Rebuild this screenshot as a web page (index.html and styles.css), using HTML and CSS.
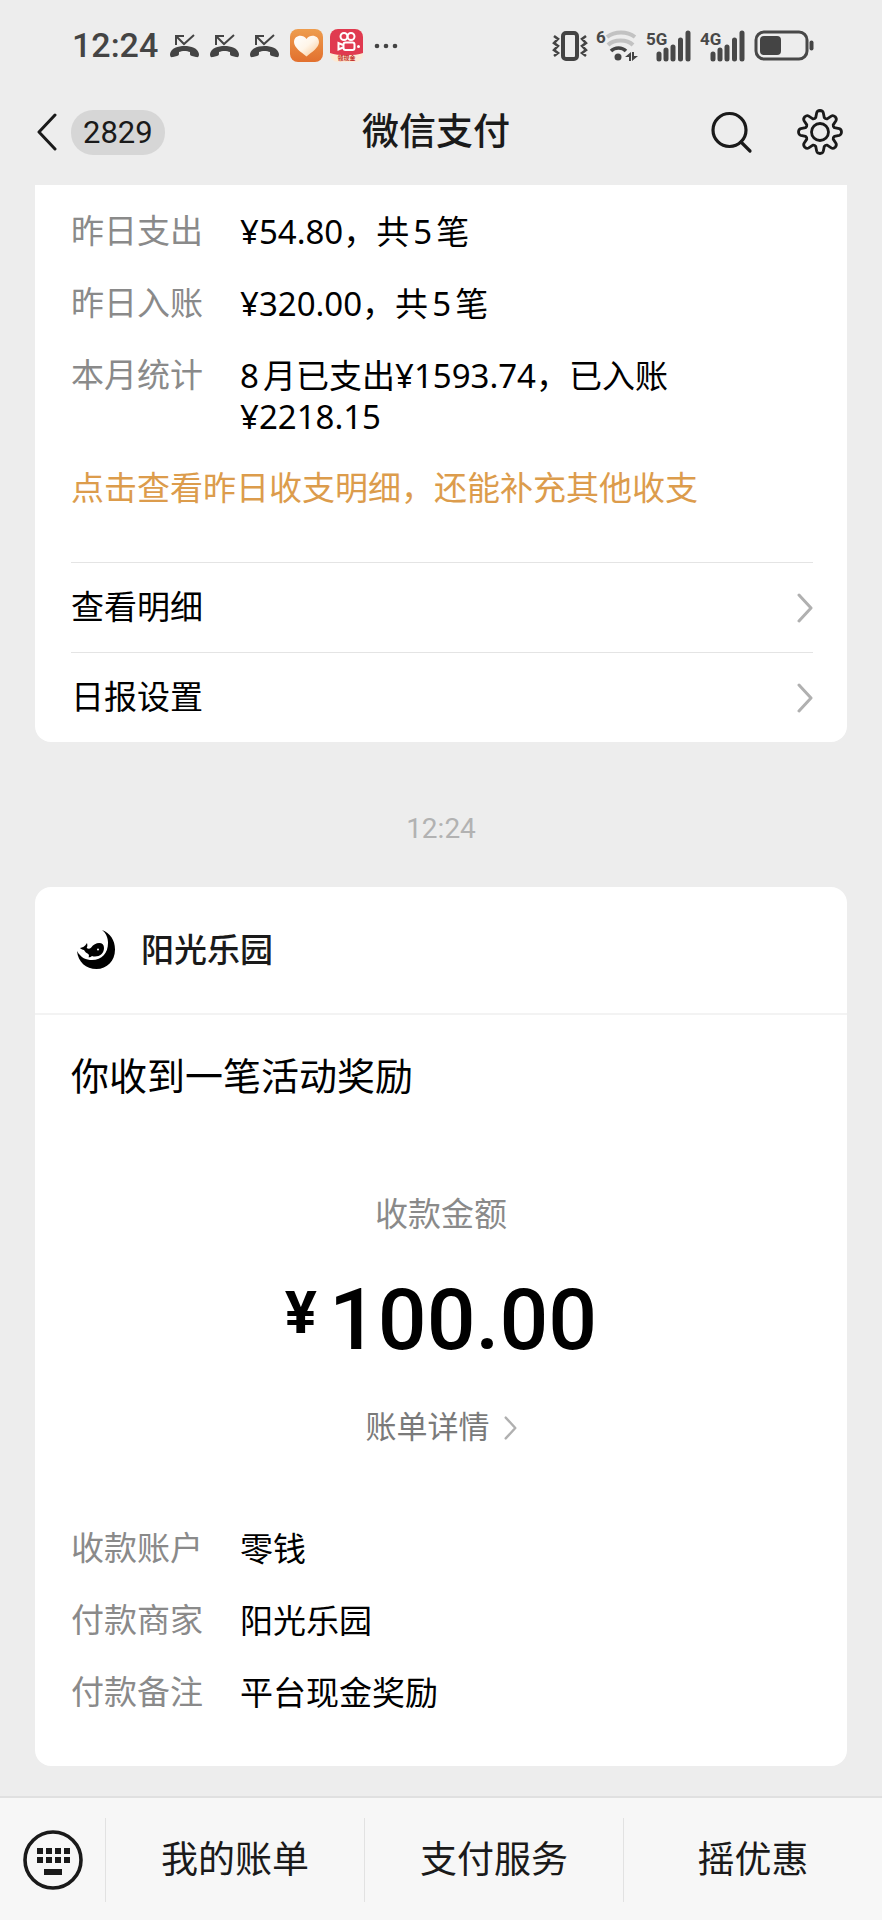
FILE: index.html
```html
<!DOCTYPE html>
<html lang="zh-CN">
<head>
    <meta charset="UTF-8">
    <meta name="viewport" content="width=device-width, initial-scale=1.0">
    <title>微信支付</title>
    <link rel="stylesheet" href="styles.css">
</head>
<body>
    <!-- shared icons -->
    <svg class="defs" width="0" height="0">
        <symbol id="missed" viewBox="0 0 29 24">
            <path d="M6 11V2h8M6 2l8 8L24 1" fill="none" stroke="#444" stroke-width="2"/>
            <path d="M0 20c1-6 8-8 14.500-8S28 14 29 20c0 3-1 3.500-3 3l-4-1c-2-.5-2-1-2-4-3-1.500-8-1.500-11 0 0 3 0 3.500-2 4l-4 1c-2 .5-3 0-3-3z" fill="#444"/>
        </symbol>
        <symbol id="bars" viewBox="0 0 46 32">
            <path d="M13 24v5M20 20v9M27 17v12M34.500 10v19M42 3v26" stroke="#484848" stroke-width="5" stroke-linecap="round"/>
        </symbol>
        <symbol id="arrow" viewBox="0 0 16 30">
            <path d="M2 2l12 13L2 28" fill="none" stroke="#b0b0b0" stroke-width="3" stroke-linecap="round" stroke-linejoin="round"/>
        </symbol>
    </svg>

    <div class="status-bar">
        <span class="clock">12:24</span>
        <div class="status-left">
            <svg width="29" height="24"><use href="#missed"/></svg>
            <svg width="29" height="24"><use href="#missed"/></svg>
            <svg width="29" height="24"><use href="#missed"/></svg>
            <svg class="app" width="33" height="33" viewBox="0 0 33 33">
                <defs>
                    <linearGradient id="orange" x1="0" y1="0" x2="0" y2="1">
                        <stop offset="0" stop-color="#ee9d4e"/>
                        <stop offset="1" stop-color="#e2702e"/>
                    </linearGradient>
                    <linearGradient id="heart" x1="0" y1="0" x2="1" y2="1">
                        <stop offset="0" stop-color="#fff"/>
                        <stop offset=".5" stop-color="#fff5e8"/>
                        <stop offset="1" stop-color="#f8c48e"/>
                    </linearGradient>
                </defs>
                <rect width="33" height="33" rx="8" fill="url(#orange)"/>
                <path d="M16.500 27.500C11 23 4 18.500 4 13c0-7 9-8.500 12.500-3C20 4.500 29 6 29 13c0 5.500-7 10-12.500 14.500z" fill="url(#heart)"/>
            </svg>
            <svg class="app" width="33" height="33" viewBox="0 0 33 33">
                <rect width="33" height="33" rx="8" fill="#fbe9d6"/>
                <path d="M8 0h17a8 8 0 0 1 8 8v16c-8 3-25 3-33 0V8a8 8 0 0 1 8-8z" fill="#e03a50"/>
                <g fill="none" stroke="#fff" stroke-width="2">
                    <circle cx="14" cy="7.500" r="3.500"/>
                    <circle cx="21" cy="7.500" r="3.500"/>
                    <rect x="13.500" y="13.500" width="11" height="7.500" rx="2"/>
                    <path d="M13 16l-4.500-2v6.500l4.500-2"/>
                </g>
                <circle cx="28.500" cy="17.500" r="1.500" fill="#fff"/>
                <text x="16.500" y="31" text-anchor="middle" font-size="6" font-weight="700" fill="#c5332b">领现金</text>
            </svg>
            <svg class="more" width="24" height="6" viewBox="0 0 24 6">
                <g fill="#444"><circle cx="3" cy="3" r="2.300"/><circle cx="12" cy="3" r="2.300"/><circle cx="21" cy="3" r="2.300"/></g>
            </svg>
        </div>
        <div class="status-right">
            <svg width="36" height="32" viewBox="0 0 36 32">
                <rect x="11" y="3" width="14" height="26" rx="3" fill="none" stroke="#444" stroke-width="4"/>
                <path d="M2 6l4 3-4 4 4 3-4 4 4 3-4 3M34 6l-4 3 4 4-4 3 4 4-4 3 4 3" fill="none" stroke="#444" stroke-width="2.500"/>
            </svg>
            <svg class="wifi" width="42" height="32" viewBox="0 0 42 32">
                <text x="0" y="13" class="net" font-size="17">6</text>
                <path d="M11 7c8-6 20-6 28 0M12 15c6-6 19-6 25 0" fill="none" stroke="#c2c2c2" stroke-width="4"/>
                <path d="M15 21c4-4 11-4 15 0" fill="none" stroke="#444" stroke-width="3.500"/>
                <circle cx="22" cy="27" r="3.500" fill="#444"/>
                <path d="M35 31v-9l-6 5h4v4zM36 22v9l6-5h-4v-4z" fill="#444"/>
            </svg>
            <svg width="46" height="32" viewBox="0 0 46 32">
                <use href="#bars"/>
                <text x="0" y="15" class="net" font-size="17">5G</text>
            </svg>
            <svg width="46" height="32" viewBox="0 0 46 32">
                <use href="#bars"/>
                <text x="0" y="15" class="net" font-size="17">4G</text>
            </svg>
            <svg width="60" height="32" viewBox="0 0 60 32">
                <rect x="2" y="2" width="51" height="27" rx="8" fill="none" stroke="#484848" stroke-width="3"/>
                <rect x="6" y="6" width="21" height="19" rx="4" fill="#444"/>
                <path d="M57.500 12.500v6" stroke="#444" stroke-width="4" stroke-linecap="round"/>
            </svg>
        </div>
    </div>

    <header class="nav">
        <a class="back" href="#" aria-label="返回">
            <svg width="20" height="40" viewBox="0 0 20 40">
                <path d="M18 3L2 20l16 17" fill="none" stroke="#1a1a1a" stroke-width="3" stroke-linecap="round" stroke-linejoin="round"/>
            </svg>
            <span class="unread">2829</span>
        </a>
        <h1>微信支付</h1>
        <div class="nav-actions">
            <button aria-label="搜索">
                <svg width="42" height="44" viewBox="0 0 42 44">
                    <g fill="none" stroke="#1a1a1a" stroke-width="3.200" stroke-linecap="round">
                        <circle cx="18.500" cy="20" r="16.500"/>
                        <path d="M30 32l9 9"/>
                    </g>
                </svg>
            </button>
            <button aria-label="设置">
                <svg width="46" height="46" viewBox="-23 -23 46 46">
                    <g fill="none" stroke="#1a1a1a" stroke-width="2.800" stroke-linejoin="round">
                        <path id="gear"/>
                        <circle r="8.500"/>
                    </g>
                </svg>
            </button>
        </div>
    </header>

    <main>
        <section class="card report">
            <dl class="info">
                <dt>昨日支出</dt><dd>¥54.80，共5笔</dd>
                <dt>昨日入账</dt><dd>¥320.00，共5笔</dd>
                <dt>本月统计</dt><dd>8月已支出¥1593.74，已入账¥2218.15</dd>
            </dl>
            <a class="tip" href="#">点击查看昨日收支明细，还能补充其他收支</a>
            <nav class="links">
                <a href="#">查看明细<svg width="16" height="30"><use href="#arrow"/></svg></a>
                <a href="#">日报设置<svg width="16" height="30"><use href="#arrow"/></svg></a>
            </nav>
        </section>

        <time class="time">12:24</time>

        <section class="card">
            <div class="merchant">
                <svg width="38" height="40" viewBox="0 0 38 40">
                    <path d="M25 0C33 3 38 10 38 19.500 38 31 30 39 19.500 39 9 39 1 32 0 21c4 7 9 9 15 9C25 30 31 23 31 13 31 8 29 3 25 0z"/>
                    <path d="M3 18c2.500-.5 5-1.500 7-5 .6 2 .5 3.500-.3 5 1.300 1 3 1.200 4.500-.5 2-2.800 5-4.500 8-4.500 3 0 4.800 1.800 4.800 5 0 5-4 8.500-9 8.500-1.200 0-2-.2-3-.6-1 1-2.300 1.500-3.500 1.300.6-1 .6-2 0-3-2-1-3.500-2.400-4.500-4.200-1.500-.3-3-1-4-2z"/>
                    <circle cx="21" cy="19.500" r="1" fill="#fff"/>
                </svg>
                <span>阳光乐园</span>
            </div>
            <h2>你收到一笔活动奖励</h2>
            <div class="payment">
                <p class="label">收款金额</p>
                <p class="amount"><span class="yen">¥</span>100.00</p>
                <a class="detail" href="#">账单详情<svg width="13" height="24"><use href="#arrow"/></svg></a>
            </div>
            <dl class="info">
                <dt>收款账户</dt><dd>零钱</dd>
                <dt>付款商家</dt><dd>阳光乐园</dd>
                <dt>付款备注</dt><dd>平台现金奖励</dd>
            </dl>
        </section>
    </main>

    <footer class="menu">
        <button class="keyboard" aria-label="键盘">
            <svg width="60" height="60" viewBox="0 0 60 60">
                <circle cx="30" cy="30" r="28" fill="none" stroke="#1a1a1a" stroke-width="3.600"/>
                <path d="M14 21h33M14 30h33" stroke="#1a1a1a" stroke-width="6" stroke-dasharray="6 3"/>
                <path d="M21 42h18" stroke="#1a1a1a" stroke-width="6"/>
            </svg>
        </button>
        <button>我的账单</button>
        <button>支付服务</button>
        <button>摇优惠</button>
    </footer>

    <script>
        // eight rounded teeth, each drawn at 45 degrees from the last
        let d = '';
        for (let i = 0; i < 8; i++) {
            const a = i * Math.PI / 4;
            const p = (r, off) => `${(r * Math.cos(a + off)).toFixed(2)} ${(r * Math.sin(a + off)).toFixed(2)}`;
            d += `${i ? 'L' : 'M'}${p(15, -0.29)}L${p(19.5, -0.17)}Q${p(21.5, -0.13)} ${p(21.5, 0)}Q${p(21.5, 0.13)} ${p(19.5, 0.17)}L${p(15, 0.29)}Q${p(14, 0.3927)} ${p(15, 0.495)}`;
        }
        document.getElementById('gear').setAttribute('d', d + 'Z');
    </script>
</body>
</html>
```

FILE: styles.css
```css
* {
    box-sizing: border-box;
}
body {
    margin: 0;
    min-height: 100vh;
    display: flex;
    flex-direction: column;
    background: #ededed;
    color: #000;
    font-family: Roboto, "Noto Sans CJK SC", sans-serif;
    font-size: 33px;
    line-height: 41px;
    text-autospace: normal;
}
h1, h2, p, dl, dd {
    margin: 0;
}
a {
    color: inherit;
    text-decoration: none;
}
button {
    padding: 0;
    border: none;
    background: none;
    color: #1a1a1a;
    font: inherit;
    cursor: pointer;
}
svg {
    display: block;
    flex: none;
}
.defs {
    position: absolute;
}

.status-bar {
    display: flex;
    align-items: center;
    height: 79px;
    padding: 12px 68px 0 72px;
}
.clock {
    font-size: 34px;
    font-weight: 500;
    color: #444;
}
.status-left, .status-right {
    display: flex;
    align-items: center;
}
.status-left {
    gap: 11px;
    margin-left: 12px;
}
.app {
    margin-right: -4px;
}
.more {
    margin-left: 4px;
}
.status-right {
    gap: 8px;
    margin-left: auto;
}
.wifi {
    overflow: visible;
}
.net {
    font-weight: 700;
    fill: #484848;
    stroke: #ededed;
    stroke-width: 3px;
    paint-order: stroke;
}

.nav {
    display: grid;
    grid-template-columns: 1fr auto 1fr;
    align-items: center;
    height: 106px;
    padding: 0 39px 0 37px;
    color: #1a1a1a;
}
.nav h1 {
    margin-right: 8px;
    font-size: 37px;
    font-weight: 500;
}
.back {
    display: flex;
    align-items: center;
    gap: 14px;
}
.unread {
    padding: 2px 12px;
    border-radius: 22px;
    background: #d6d6d6;
    font-size: 31px;
}
.nav-actions {
    display: flex;
    justify-content: flex-end;
    align-items: center;
    gap: 44px;
}

main {
    flex: 1;
    padding: 0 35px 30px;
}
.card {
    border-radius: 16px;
    background: #fff;
}
.report {
    padding-top: 26px;
    border-radius: 0 0 16px 16px;
}
.info {
    display: grid;
    grid-template-columns: 133px 1fr;
    gap: 31px 36px;
    padding: 0 150px 0 36px;
}
.info dt {
    color: #8a8a8a;
}
.info dd {
    font-family: "Noto Sans", "Noto Sans CJK SC", sans-serif;
}
.tip {
    display: block;
    padding: 31px 36px 53px;
    color: #dc9c4c;
}
.links a {
    display: flex;
    justify-content: space-between;
    align-items: center;
    height: 90px;
    margin: 0 34px 0 36px;
    border-top: 1px solid #e4e4e4;
}

.time {
    display: block;
    padding: 66px 0 38px;
    text-align: center;
    font-size: 28px;
    color: #b2b2b2;
}

.merchant {
    display: flex;
    align-items: center;
    gap: 26px;
    height: 128px;
    padding: 0 42px;
    border-bottom: 2px solid #f3f3f3;
    color: #1a1a1a;
    font-weight: 500;
}
.card h2 {
    padding: 42px 36px 0;
    font-size: 38px;
    font-weight: 400;
}
.payment {
    display: flex;
    flex-direction: column;
    align-items: center;
    padding: 96px 0 80px;
}
.label {
    color: #8a8a8a;
}
.amount {
    display: flex;
    align-items: flex-start;
    gap: 12px;
    padding: 41px 0 44px;
    font-size: 86px;
    font-weight: 500;
    line-height: 87px;
}
.yen {
    font-size: 60px;
    font-weight: 700;
    line-height: 74px;
}
.detail {
    display: flex;
    align-items: center;
    gap: 14px;
    font-size: 31px;
    color: #7a7a7a;
}
.card > .info:last-child {
    padding-bottom: 53px;
}

.menu {
    display: grid;
    grid-template-columns: 105px 1fr 1fr 1fr;
    height: 124px;
    border-top: 2px solid #e0e0e0;
    background: #f7f7f7;
}
.menu button {
    height: 84px;
    margin-top: 20px;
    border-left: 1px solid #e2e2e2;
    font-size: 37px;
}
.menu .keyboard {
    padding-left: 23px;
    border: none;
}
```
